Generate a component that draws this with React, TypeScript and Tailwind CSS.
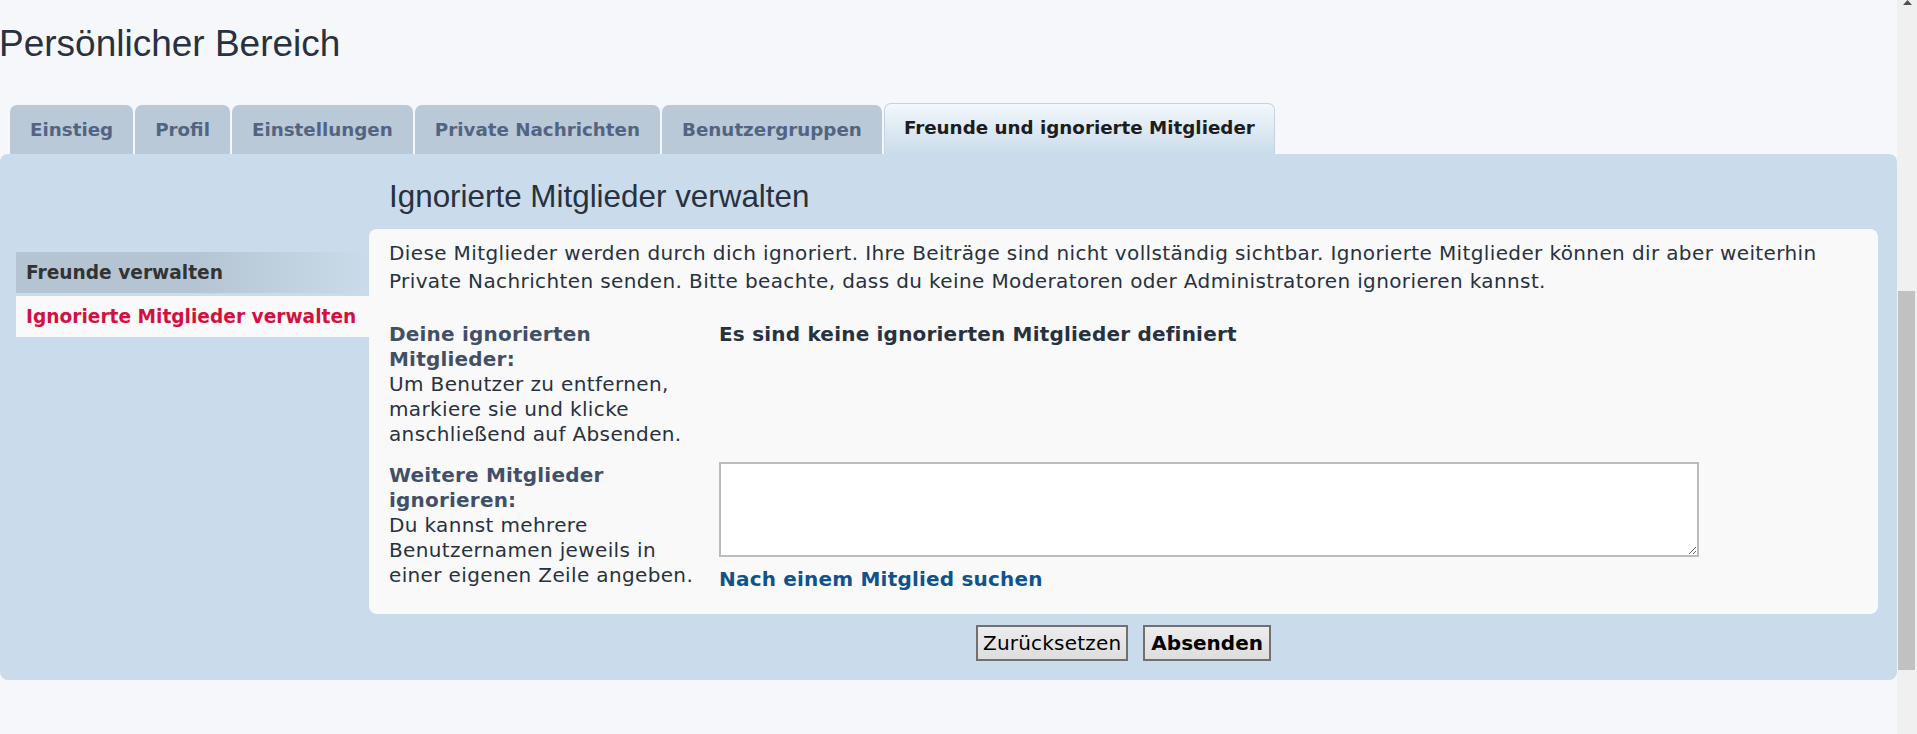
import React from "react";

const tabs = ["Einstieg", "Profil", "Einstellungen", "Private Nachrichten", "Benutzergruppen"];

const App: React.FC = () => {
  return (
    <div className="h-[734px] overflow-hidden flex bg-[#f5f7fa] font-['DejaVu_Sans',sans-serif]">
      {/* page */}
      <div className="flex-1 pt-[20px]">
        <h2 className="ml-[-1px] text-[37px] leading-[48px] text-[#28313f] font-['Liberation_Sans',Arial,sans-serif]">
          Persönlicher Bereich
        </h2>

        {/* Tabs */}
        <div className="flex items-end pl-[10px] mt-[35px]">
          {tabs.map((t) => (
            <div
              key={t}
              className="mr-[2px] h-[49px] px-[20px] flex items-center rounded-t-[7px] bg-[#b9c9d8] text-[18.3px] font-bold text-[#536482]"
            >
              {t}
            </div>
          ))}
          <div className="h-[51px] px-[19px] pb-[3px] flex items-center rounded-t-[7px] border border-b-0 border-[#c2d3e2] bg-linear-to-b from-[#f3f8fb] to-[#cadceb] text-[18.3px] font-bold text-[#1d1d1d]">
            Freunde und ignorierte Mitglieder
          </div>
        </div>

        {/* Panel */}
        <div className="rounded-[8px] bg-[#cadceb] pt-[23px] pl-[16px] pr-[19px] pb-[19px] flex">
          {/* Left navigation */}
          <div className="w-[353px] mt-[75px] shrink-0">
            <div className="h-[41px] mb-[3px] pl-[10px] flex items-center bg-linear-to-r from-[#b4c4d3] from-50% to-[#cadceb] text-[18.6px] font-bold text-[#333333]">
              Freunde verwalten
            </div>
            <div className="h-[41px] pl-[10px] flex items-center bg-[#f9f9f9] text-[18.6px] font-bold text-[#d31141]">
              Ignorierte Mitglieder verwalten
            </div>
          </div>

          {/* Main column */}
          <div className="flex-1">
            <h2 className="pl-[20px] text-[31.4px] leading-[40px] mb-[12px] text-[#28313f] font-['Liberation_Sans',Arial,sans-serif]">
              Ignorierte Mitglieder verwalten
            </h2>

            <div className="rounded-[8px] bg-[#f9f9f9] pt-[10px] px-[20px] pb-[22px] text-[20px] tracking-[0.36px] text-[#28313f]">
              <p className="leading-[28px] tracking-[0.38px]">
                Diese Mitglieder werden durch dich ignoriert. Ihre Beiträge sind nicht vollständig sichtbar. Ignorierte Mitglieder können dir aber weiterhin Private Nachrichten senden. Bitte beachte, dass du keine Moderatoren oder Administratoren ignorieren kannst.
              </p>

              <div className="mt-[27px] flex leading-[25px]">
                <div className="w-[330px] pr-[14px] shrink-0">
                  <div className="font-bold tracking-[0.2px] text-[#425067]">Deine ignorierten Mitglieder:</div>
                  <div>Um Benutzer zu entfernen, markiere sie und klicke anschließend auf Absenden.</div>
                </div>
                <div className="font-bold tracking-[0.2px] text-[#28313f]">
                  Es sind keine ignorierten Mitglieder definiert
                </div>
              </div>

              <div className="mt-[16px] flex leading-[25px]">
                <div className="w-[330px] pr-[14px] shrink-0">
                  <div className="font-bold tracking-[0.2px] text-[#425067]">Weitere Mitglieder ignorieren:</div>
                  <div>Du kannst mehrere Benutzernamen jeweils in einer eigenen Zeile angeben.</div>
                </div>
                <div className="flex-1 mt-[-1px]">
                  <textarea className="block w-[980px] h-[95px] bg-white border-2 border-[#bcbcbc] outline-none" />
                  <a href="#" className="block mt-[10px] font-bold tracking-[0.2px] text-[#105289]">
                    Nach einem Mitglied suchen
                  </a>
                </div>
              </div>
            </div>

            {/* Buttons */}
            <div className="mt-[11px] flex justify-center gap-[15px] text-[20px] leading-[24px] text-black">
              <button className="h-[36px] px-[5px] border-2 border-[#707070] bg-linear-to-b from-[#ececec] to-[#dedede] tracking-[0.2px]">
                Zurücksetzen
              </button>
              <button className="h-[36px] px-[6px] border-2 border-[#707070] bg-linear-to-b from-[#ececec] to-[#dedede] font-bold">
                Absenden
              </button>
            </div>
          </div>
        </div>
      </div>

      {/* Scrollbar */}
      <div className="w-[20px] shrink-0 bg-[#f0f0f0] flex flex-col items-center">
        <svg width="9" height="5" viewBox="0 0 9 5">
          <path d="M4.5 0 L9 5 L0 5 Z" fill="#505050" />
        </svg>
        <div className="mt-[286px] ml-[-1px] w-[17px] h-[379px] bg-[#c1c1c1]" />
      </div>
    </div>
  );
};

export default App;
